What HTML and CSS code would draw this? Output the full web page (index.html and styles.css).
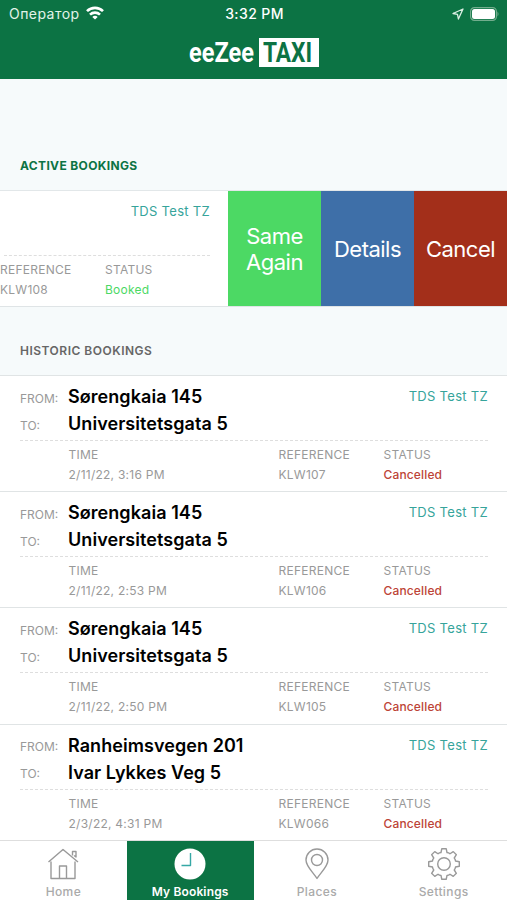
FILE: index.html
```html
<!DOCTYPE html>
<html lang="en">
<head>
    <meta charset="utf-8">
    <title>My Bookings</title>
    <link rel="stylesheet" href="styles.css">
</head>
<body>
    <header class="header">
        <div class="status-bar">
            <div class="carrier">
                <span>Оператор</span>
                <svg class="wifi" width="18" height="14" viewBox="0 0 18 14" fill="none" stroke="#fff" stroke-width="2.6">
                    <path d="M1 5.2C5.5.7 12.5.7 17 5.2M4 8.7c2.8-2.8 7.2-2.8 10 0"/>
                    <path d="M9 13.5L6.300 10.900c1.500-1.500 3.900-1.500 5.400 0z" fill="#fff" stroke="none"/>
                </svg>
            </div>
            <span class="clock">3:32 PM</span>
            <div class="indicators">
                <svg width="12" height="12" viewBox="0 0 12 12" fill="none" stroke="#dcefe4" stroke-width="1.3" stroke-linejoin="round"><path d="M11 1L1 5.5l4.500.9.900 4.600z"/></svg>
                <svg width="30" height="14" viewBox="0 0 30 14">
                    <rect x=".6" y=".6" width="25.8" height="12.8" rx="3.8" fill="none" stroke="#72ad8d" stroke-width="1.2"/>
                    <rect x="2" y="2" width="23" height="10" rx="2.5" fill="#fff"/>
                    <path d="M27.500 4.500q2 2.500 0 5z" fill="#72ad8d"/>
                </svg>
            </div>
        </div>
        <div class="logo"><span class="logo-name">eeZee</span><span class="logo-box"><span>TAXI</span></span></div>
    </header>

    <main>
        <h2 class="section-title active">ACTIVE BOOKINGS</h2>
        <div class="swipe-row">
            <div class="swipe-card">
                <div class="company">TDS Test TZ</div>
                <div class="swipe-details">
                    <div class="detail ref"><span>REFERENCE</span><span>KLW108</span></div>
                    <div class="detail"><span>STATUS</span><span class="booked">Booked</span></div>
                </div>
            </div>
            <div class="action again">Same<br>Again</div>
            <div class="action details">Details</div>
            <div class="action cancel">Cancel</div>
        </div>

        <h2 class="section-title historic">HISTORIC BOOKINGS</h2>
        <div class="booking">
            <div class="route">
                <span class="label">FROM:</span><span class="place">Sørengkaia 145</span><span class="company">TDS Test TZ</span>
                <span class="label">TO:</span><span class="place">Universitetsgata 5</span>
            </div>
            <div class="info">
                <div class="detail"><span>TIME</span><span>2/11/22, 3:16 PM</span></div>
                <div class="detail"><span>REFERENCE</span><span>KLW107</span></div>
                <div class="detail"><span>STATUS</span><span class="cancelled">Cancelled</span></div>
            </div>
        </div>
        <div class="booking">
            <div class="route">
                <span class="label">FROM:</span><span class="place">Sørengkaia 145</span><span class="company">TDS Test TZ</span>
                <span class="label">TO:</span><span class="place">Universitetsgata 5</span>
            </div>
            <div class="info">
                <div class="detail"><span>TIME</span><span>2/11/22, 2:53 PM</span></div>
                <div class="detail"><span>REFERENCE</span><span>KLW106</span></div>
                <div class="detail"><span>STATUS</span><span class="cancelled">Cancelled</span></div>
            </div>
        </div>
        <div class="booking">
            <div class="route">
                <span class="label">FROM:</span><span class="place">Sørengkaia 145</span><span class="company">TDS Test TZ</span>
                <span class="label">TO:</span><span class="place">Universitetsgata 5</span>
            </div>
            <div class="info">
                <div class="detail"><span>TIME</span><span>2/11/22, 2:50 PM</span></div>
                <div class="detail"><span>REFERENCE</span><span>KLW105</span></div>
                <div class="detail"><span>STATUS</span><span class="cancelled">Cancelled</span></div>
            </div>
        </div>
        <div class="booking">
            <div class="route">
                <span class="label">FROM:</span><span class="place">Ranheimsvegen 201</span><span class="company">TDS Test TZ</span>
                <span class="label">TO:</span><span class="place">Ivar Lykkes Veg 5</span>
            </div>
            <div class="info">
                <div class="detail"><span>TIME</span><span>2/3/22, 4:31 PM</span></div>
                <div class="detail"><span>REFERENCE</span><span>KLW066</span></div>
                <div class="detail"><span>STATUS</span><span class="cancelled">Cancelled</span></div>
            </div>
        </div>
    </main>

    <nav class="tabs">
        <div class="tab">
            <svg width="34" height="34" viewBox="0 0 34 34">
                <path d="M2.500 15L17 2.500l15 12.500M5 14.500v17h24v-17M13.500 31.500V19h7v12.500M26.500 8.500V4.500h3.500v5.500l-2-1.500"/>
            </svg>
            <span>Home</span>
        </div>
        <div class="tab selected">
            <svg width="34" height="34" viewBox="0 0 34 34">
                <circle class="face" cx="17" cy="17" r="15.5"/>
                <path class="hands" d="M17.500 6v12.500H8.500"/>
            </svg>
            <span>My Bookings</span>
        </div>
        <div class="tab">
            <svg width="34" height="34" viewBox="0 0 34 34">
                <path d="M17 31.500C13 25 6 19.500 6 13a11 11 0 0 1 22 0c0 6.500-7 12-11 18.500z"/>
                <circle cx="17" cy="13" r="5.5"/>
            </svg>
            <span>Places</span>
        </div>
        <div class="tab">
            <svg width="34" height="34" viewBox="-17 -17 34 34">
                <path d="M-3-11.500L-2.200-15.300H2.200L3-11.500Q4.700-11.400 6-10.250L9.260-12.370L12.370-9.260L10.250-6Q11.400-4.700 11.500-3L15.300-2.200V2.200L11.500 3Q11.400 4.700 10.250 6L12.370 9.260L9.260 12.370L6 10.250Q4.700 11.400 3 11.500L2.200 15.300H-2.200L-3 11.500Q-4.700 11.400-6 10.250L-9.260 12.370L-12.370 9.260L-10.250 6Q-11.400 4.700-11.500 3L-15.300 2.200V-2.200L-11.500-3Q-11.400-4.700-10.250-6L-12.370-9.260L-9.260-12.370L-6-10.250Q-4.700-11.400-3-11.500z"/>
                <circle r="6.3"/>
            </svg>
            <span>Settings</span>
        </div>
    </nav>
</body>
</html>
```

FILE: styles.css
```css
* {
    box-sizing: border-box;
}
body {
    margin: 0;
    height: 900px;
    overflow: hidden;
    display: flex;
    flex-direction: column;
    background: #f6fafb;
    font-family: Inter, sans-serif;
}
.header {
    height: 79px;
    flex: none;
    background: #0c7344;
    color: #fff;
}
.status-bar {
    height: 27px;
    padding: 0 7px 0 9px;
    display: grid;
    grid-template-columns: 1fr auto 1fr;
    align-items: center;
    font-size: 14px;
}
.carrier {
    display: flex;
    align-items: center;
    gap: 6px;
    letter-spacing: 0.45px;
    color: #e3f3e9;
}
.wifi {
    margin-top: -2px;
}
.clock {
    font-weight: 500;
    letter-spacing: 0.4px;
}
.indicators {
    display: flex;
    justify-content: flex-end;
    align-items: center;
    gap: 6px;
}
.logo {
    display: flex;
    justify-content: center;
    align-items: center;
    gap: 4px;
    margin-top: 11px;
    height: 29px;
    font: bold 28px/29px Roboto, sans-serif;
}
.logo-name {
    width: 66px;
    transform: scaleX(0.84);
    transform-origin: left;
}
.logo-box {
    width: 60px;
    height: 29px;
    padding-left: 4px;
    background: #fff;
    color: #0c7344;
}
.logo-box span {
    display: block;
    width: 52px;
    transform: scaleX(0.81);
    transform-origin: left;
}
main {
    flex: 1;
}
.section-title {
    margin: 0;
    padding-left: 20px;
    font-size: 12px;
    line-height: 16px;
    font-weight: 700;
    letter-spacing: 0.35px;
}
.section-title.active {
    height: 111px;
    padding-top: 79px;
    color: #0c7344;
}
.section-title.historic {
    height: 68px;
    padding-top: 36px;
    font-weight: 600;
    letter-spacing: 0.5px;
    color: #666;
}
.swipe-row {
    display: flex;
    height: 117px;
    border-top: 1px solid #e2e7e9;
    border-bottom: 1px solid #dfe4e6;
    background: #fff;
}
.swipe-card {
    width: 228px;
    padding: 10px 18px 0 0;
}
.swipe-card .company {
    height: 54px;
}
.swipe-details {
    display: flex;
    margin-left: 4px;
    padding-top: 4px;
    border-top: 1px dashed #dedede;
}
.ref {
    width: 105px;
    margin-left: -4px;
}
.action {
    flex: 1;
    display: flex;
    align-items: center;
    justify-content: center;
    text-align: center;
    color: #fff;
    font-size: 22px;
    line-height: 26px;
    letter-spacing: -0.5px;
}
.again {
    background: #4cd964;
}
.details {
    background: #3e6fa8;
}
.cancel {
    background: #a32f1a;
}
.company {
    color: #36a49b;
    font-size: 13px;
    line-height: 20px;
    letter-spacing: 0.3px;
    text-align: right;
}
.detail {
    display: flex;
    flex-direction: column;
    font-size: 12px;
    line-height: 20px;
    letter-spacing: 0.25px;
    color: #999;
}
.booked {
    color: #4cd964;
}
.cancelled {
    color: #bd4437;
    font-weight: 500;
    letter-spacing: 0.15px;
}
.booking {
    height: 116.2px;
    padding: 7px 19px 0 20px;
    background: #fff;
    border-top: 1px solid #e0e4e5;
}
.route {
    display: grid;
    grid-template-columns: 48px 1fr auto;
    grid-auto-rows: 27px;
    align-items: center;
    height: 58px;
    border-bottom: 1px dashed #dedede;
}
.route .company {
    margin-top: -1px;
}
.label {
    padding-top: 3px;
    font-size: 12px;
    color: #999;
}
.place {
    font-size: 18px;
    font-weight: 600;
    letter-spacing: 0.06px;
    color: #000;
}
.info {
    display: grid;
    grid-template-columns: 210px 105px auto;
    padding: 4px 0 0 48px;
}
.info .detail {
    padding-left: 0.5px;
}
.tabs {
    display: flex;
    height: 61px;
    flex: none;
    background: #fff;
    border-top: 1px solid #dedede;
}
.tab {
    flex: 1;
    display: flex;
    flex-direction: column;
    align-items: center;
    padding-top: 6px;
    font-size: 12px;
    line-height: 16px;
    font-weight: 500;
    letter-spacing: 0.4px;
    color: #aaa;
}
.tab svg {
    flex: none;
    margin-bottom: 3px;
    fill: none;
    stroke: #999;
    stroke-width: 1.4;
    stroke-linejoin: round;
}
.tab.selected {
    background: #0c7344;
    color: #fff;
    font-weight: 600;
    letter-spacing: 0.15px;
}
.tab .face {
    fill: #fff;
    stroke: none;
}
.tab .hands {
    stroke: #36a8a5;
}
```
